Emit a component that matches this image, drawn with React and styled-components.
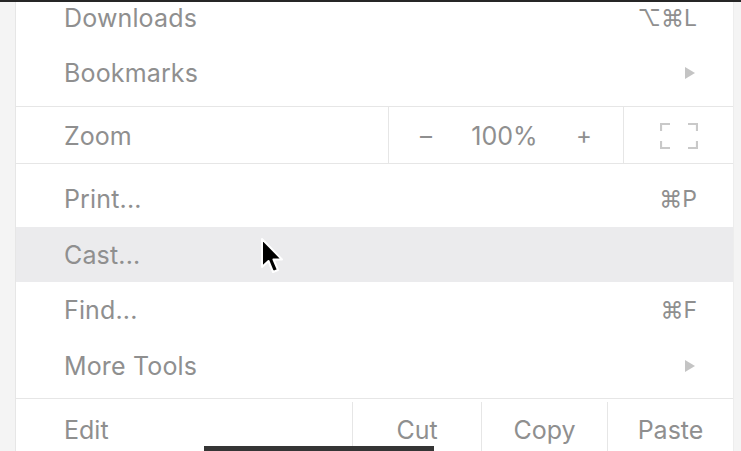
import React from "react";
import styled, { createGlobalStyle } from "styled-components";

const Global = createGlobalStyle`
  html, body { margin: 0; padding: 0; background: #f4f4f4; overflow: hidden; }
  * { box-sizing: border-box; }
`;

const Screen = styled.div`
  position: relative;
  width: 741px;
  height: 451px;
  display: flex;
  flex-direction: column;
  overflow: hidden;
  font-family: "Inter", "DejaVu Sans", sans-serif;
`;

const TopBar = styled.div`
  height: 2px;
  background: #262626;
  flex: none;
`;

const Body = styled.div`
  flex: 1;
  display: flex;
  min-height: 0;
`;

const SideStrip = styled.div`
  flex: none;
  width: ${(p) => p.$w}px;
  background: #f4f4f4;
  ${(p) => (p.$left ? "border-right: 1px solid #e6e6e6;" : "border-left: 1px solid #ededed;")}
`;

const Menu = styled.div`
  flex: 1;
  background: #ffffff;
  display: flex;
  flex-direction: column;
  min-height: 0;
  overflow: hidden;
`;

const MenuInner = styled.div`
  display: flex;
  flex-direction: column;
  margin-top: -12.5px;
`;

const Section = styled.div`
  display: flex;
  flex-direction: column;
  padding: ${(p) => p.$pad || "0"};
`;

const Separator = styled.div`
  height: 1px;
  background: #e6e6e6;
  flex: none;
`;

const Item = styled.div`
  height: 55.5px;
  display: flex;
  align-items: center;
  justify-content: space-between;
  padding: 1px 36px 0 48px;
  background: ${(p) => (p.$active ? "#ebebed" : "transparent")};
  color: #8f8f8f;
  font-size: 25px;
`;

const Label = styled.span`
  letter-spacing: 0.15px;
`;

const Shortcut = styled.span`
  color: #8f8f8f;
  font-size: 23px;
  font-family: "Inter", "DejaVu Sans", sans-serif;
`;

const Arrow = styled.span`
  width: 0;
  height: 0;
  margin-right: 2px;
  border-top: 6.5px solid transparent;
  border-bottom: 6.5px solid transparent;
  border-left: 10px solid #c4c4c4;
`;

const SplitRow = styled.div`
  height: 56.5px;
  display: flex;
  align-items: stretch;
  color: #8f8f8f;
  font-size: 25px;
  padding-top: ${(p) => p.$shift || 0}px;
`;

const SplitLabel = styled.div`
  width: ${(p) => p.$w}px;
  flex: none;
  display: flex;
  align-items: center;
  padding: 2px 0 0 48px;
`;

const Cell = styled.div`
  width: ${(p) => (p.$w ? `${p.$w}px` : "auto")};
  flex: ${(p) => (p.$w ? "none" : "1")};
  border-left: 1px solid #e6e6e6;
  display: flex;
  align-items: center;
  justify-content: ${(p) => p.$justify || "center"};
  padding: ${(p) => p.$pad || "2px 0 0 0"};
`;

const ZoomSign = styled.span`
  font-size: 24px;
  color: #8f8f8f;
  width: 14px;
  text-align: center;
`;

const Overlay = styled.div`
  position: absolute;
  left: 204px;
  top: 446px;
  width: 230px;
  height: 5px;
  background: #353535;
  overflow: hidden;
`;

const CursorWrap = styled.div`
  position: absolute;
  left: 259px;
  top: 237px;
  width: 26px;
  height: 40px;
`;

function FullscreenIcon() {
  return (
    <svg width="38" height="26" viewBox="0 0 38 26" fill="none" stroke="#c9c9c9" strokeWidth="2.2">
      <path d="M1 8V1h9" />
      <path d="M28 1h9v7" />
      <path d="M1 18v7h9" />
      <path d="M28 25h9v-7" />
    </svg>
  );
}

function Cursor() {
  return (
    <svg width="26" height="40" viewBox="0 0 26 40">
      <path
        d="M3 2 L3 30 L9.5 24 L14 35 L19 33 L14.5 22.5 L23 22.5 Z"
        fill="#000"
        stroke="#fff"
        strokeWidth="2"
        strokeLinejoin="round"
      />
    </svg>
  );
}

export default function App() {
  return (
    <>
      <Global />
      <Screen>
        <TopBar />
        <Body>
          <SideStrip $w={16} $left />
          <Menu>
            <MenuInner>
              <Section $pad="0 0 5px 0">
                <Item>
                  <Label>Downloads</Label>
                  <Shortcut>⌥⌘L</Shortcut>
                </Item>
                <Item>
                  <Label>Bookmarks</Label>
                  <Arrow />
                </Item>
              </Section>
              <Separator />
              <SplitRow>
                <SplitLabel $w={372}>Zoom</SplitLabel>
                <Cell $w={235} $justify="space-between" $pad="2px 33px 0 30px">
                  <ZoomSign>–</ZoomSign>
                  <span>100%</span>
                  <ZoomSign>+</ZoomSign>
                </Cell>
                <Cell>
                  <FullscreenIcon />
                </Cell>
              </SplitRow>
              <Separator />
              <Section $pad="7px 0 5px 0">
                <Item>
                  <Label>Print...</Label>
                  <Shortcut>⌘P</Shortcut>
                </Item>
                <Item $active>
                  <Label>Cast...</Label>
                </Item>
                <Item>
                  <Label>Find...</Label>
                  <Shortcut>⌘F</Shortcut>
                </Item>
                <Item>
                  <Label>More Tools</Label>
                  <Arrow />
                </Item>
              </Section>
              <Separator />
              <SplitRow $shift={3}>
                <SplitLabel $w={336}>Edit</SplitLabel>
                <Cell $w={129}>Cut</Cell>
                <Cell $w={126}>Copy</Cell>
                <Cell>Paste</Cell>
              </SplitRow>
            </MenuInner>
          </Menu>
          <SideStrip $w={8} />
        </Body>
        <CursorWrap>
          <Cursor />
        </CursorWrap>
        <Overlay />
      </Screen>
    </>
  );
}
